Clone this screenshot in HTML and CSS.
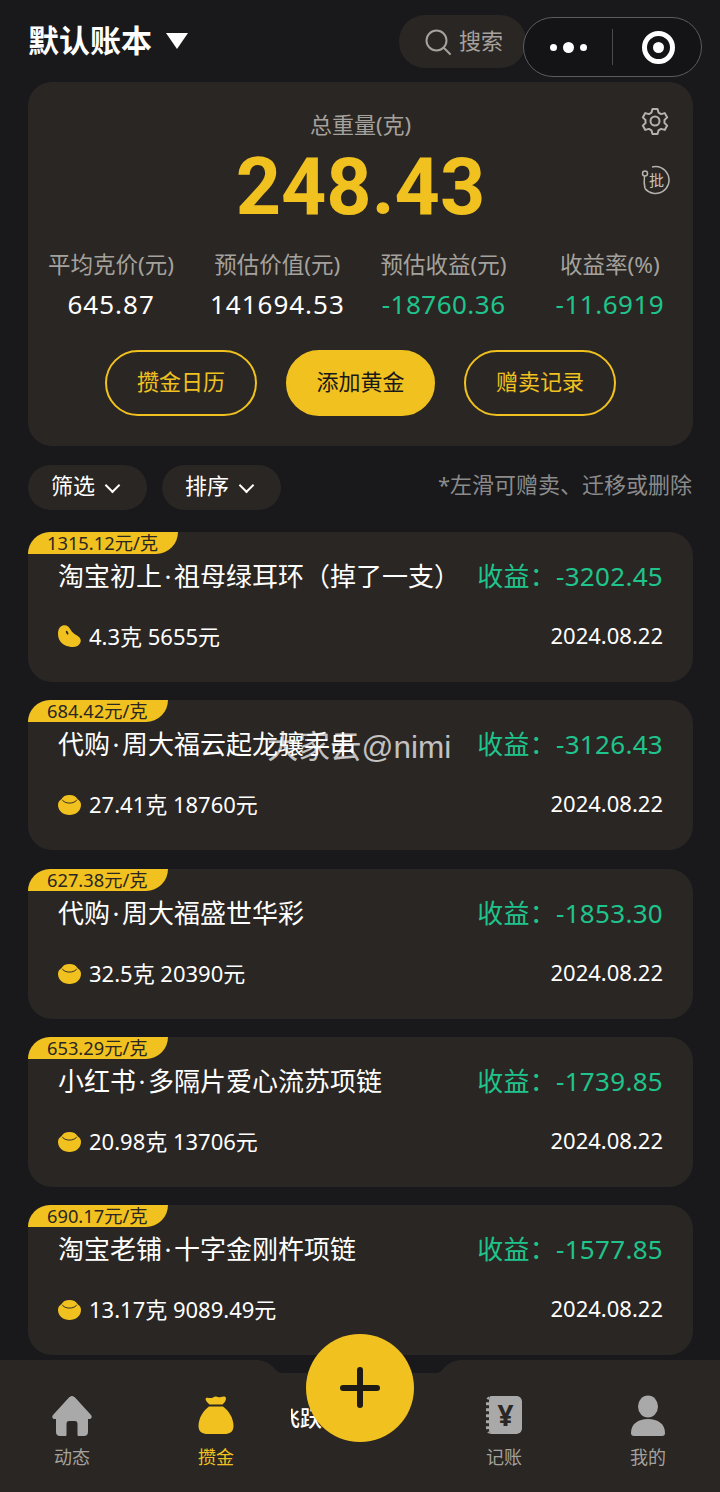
FILE: index.html
```html
<!DOCTYPE html>
<html lang="zh-CN">
<head>
  <meta charset="UTF-8">
  <title>攒金</title>
  <link rel="stylesheet" href="styles.css">
</head>
<body>
<div class="page">

  <header class="top">
    <div class="book"><span class="book-name">默认账本</span><span class="caret"></span></div>
    <div class="search">
      <svg width="28" height="28" viewBox="0 0 28 28" fill="none" stroke="#a5a29e" stroke-width="2"><circle cx="12.5" cy="12.5" r="10"/><path d="M20 20l6 6" stroke-linecap="round"/></svg>
      <span>搜索</span>
    </div>
  </header>

  <!-- 小程序胶囊 -->
  <div class="capsule">
    <div class="dots"><i></i><b></b><i></i></div>
    <div class="capsule-line"></div>
    <div class="target"></div>
  </div>

  <section class="summary">
    <svg class="gear" width="28" height="28" viewBox="0 0 28 28" fill="none" stroke="#b5b2ae" stroke-width="2" stroke-linejoin="round"><path d="M11.500 2h5l1 3.600 2.600 1.500 3.600-1 2.500 4.300-2.700 2.600v3l2.700 2.600-2.500 4.300-3.600-1-2.600 1.500-1 3.600h-5l-1-3.600-2.600-1.500-3.600 1-2.500-4.300 2.700-2.600v-3l-2.700-2.600 2.500-4.300 3.600 1 2.600-1.500z"/><circle cx="14" cy="14" r="4.500"/></svg>
    <div class="batch">
      <svg width="30" height="30" viewBox="0 0 30 30" fill="none" stroke="#b5b2ae" stroke-width="1.500"><path d="M11 2a13.500 13.500 0 1 1-7 21.500"/><circle cx="4" cy="8.500" r="2.500"/><path d="M3.500 11c-.5 4-.5 8.500.5 12.500"/></svg>
      <span>批</span>
    </div>
    <div class="summary-title">总重量(克)</div>
    <div class="summary-value">248.43</div>
    <div class="stats">
      <div class="stat"><div class="stat-label">平均克价(元)</div><div class="stat-num">645.87</div></div>
      <div class="stat"><div class="stat-label">预估价值(元)</div><div class="stat-num">141694.53</div></div>
      <div class="stat"><div class="stat-label">预估收益(元)</div><div class="stat-num green">-18760.36</div></div>
      <div class="stat"><div class="stat-label">收益率(%)</div><div class="stat-num green">-11.6919</div></div>
    </div>
    <div class="actions">
      <div class="btn">攒金日历</div>
      <div class="btn btn-solid">添加黄金</div>
      <div class="btn">赠卖记录</div>
    </div>
  </section>

  <div class="filters">
    <div class="pill"><span>筛选</span><span class="chev"></span></div>
    <div class="pill"><span>排序</span><span class="chev"></span></div>
    <div class="hint">*左滑可赠卖、迁移或删除</div>
  </div>

  <div class="list">
    <div class="item">
      <div class="price">1315.12元/克</div>
      <div class="item-row item-head">
        <div class="item-name">淘宝初上<span class="mid">·</span>祖母绿耳环（掉了一支）</div>
        <div class="item-gain">收益：-3202.45</div>
      </div>
      <div class="item-row">
        <div class="item-info">
          <svg class="kind" viewBox="0 0 24 24"><path d="M5 .500c3.500-1 6.500 1 8.500 5 1 2 3 3.500 5.500 5 3.500 2 5.500 4 4.500 7.500-1.500 4.500-7 6-12 4.500C4.500 21 0 16 0 9 0 5 1.500 1.500 5 .500z" fill="#f0c11f"/><path d="M9 7l1 2" stroke="#2a2623" stroke-width="1.800" stroke-linecap="round"/></svg>
          4.3克 5655元
        </div>
        <div class="item-date">2024.08.22</div>
      </div>
    </div>
    <div class="item">
      <div class="price">684.42元/克</div>
      <div class="item-row item-head">
        <div class="item-name">代购<span class="mid">·</span>周大福云起龙骧手串</div>
        <div class="item-gain">收益：-3126.43</div>
      </div>
      <div class="item-row">
        <div class="item-info">
          <svg class="kind" viewBox="0 0 24 24"><use href="#ingot"/></svg>
          27.41克 18760元
        </div>
        <div class="item-date">2024.08.22</div>
      </div>
    </div>
    <div class="item">
      <div class="price">627.38元/克</div>
      <div class="item-row item-head">
        <div class="item-name">代购<span class="mid">·</span>周大福盛世华彩</div>
        <div class="item-gain">收益：-1853.30</div>
      </div>
      <div class="item-row">
        <div class="item-info">
          <svg class="kind" viewBox="0 0 24 24"><use href="#ingot"/></svg>
          32.5克 20390元
        </div>
        <div class="item-date">2024.08.22</div>
      </div>
    </div>
    <div class="item">
      <div class="price">653.29元/克</div>
      <div class="item-row item-head">
        <div class="item-name">小红书<span class="mid">·</span>多隔片爱心流苏项链</div>
        <div class="item-gain">收益：-1739.85</div>
      </div>
      <div class="item-row">
        <div class="item-info">
          <svg class="kind" viewBox="0 0 24 24"><use href="#ingot"/></svg>
          20.98克 13706元
        </div>
        <div class="item-date">2024.08.22</div>
      </div>
    </div>
    <div class="item">
      <div class="price">690.17元/克</div>
      <div class="item-row item-head">
        <div class="item-name">淘宝老铺<span class="mid">·</span>十字金刚杵项链</div>
        <div class="item-gain">收益：-1577.85</div>
      </div>
      <div class="item-row">
        <div class="item-info">
          <svg class="kind" viewBox="0 0 24 24"><use href="#ingot"/></svg>
          13.17克 9089.49元
        </div>
        <div class="item-date">2024.08.22</div>
      </div>
    </div>
  </div>

  <nav class="tabbar">
    <svg class="notch" width="208" height="14" viewBox="0 0 208 14"><path d="M0 0h208c-8 0-13 2-18 7-3 3-5 6-9 6H27c-4 0-6-3-9-6C13 2 8 0 0 0z" fill="#19191c"/></svg>
    <div class="tab">
      <svg width="42" height="42" viewBox="0 0 42 42"><path d="M21 1c1.500 0 2.500 1 3.500 2L40 20c1.500 2 .5 4-2 4h-1v13c0 2.500-1.500 4-4 4h-5c-1 0-1.500-.5-1.500-1.500V29c0-2-1-3-2.500-3h-6c-1.500 0-2.500 1-2.500 3v10.500c0 1-.5 1.500-1.500 1.500H9c-2.500 0-4-1.500-4-4V24H4c-2.500 0-3.500-2-2-4L17.500 3c1-1 2-2 3.500-2z" fill="#a9a9a9"/></svg>
      <span>动态</span>
    </div>
    <div class="tab tab-on">
      <svg width="42" height="42" viewBox="0 0 42 42"><path d="M11 3c2-1 3.500.5 5.500 0S19 1 21 1.500s3 1 5 .5 5-1 5 1.500c0 2.500-2 4.500-3.500 6h-13C13 8 9.500 5 11 3z" fill="#f0c11f"/><path d="M14 11.500h14C33.500 15.500 38.500 23 38.500 31c0 6-4 8-9 8h-17c-5 0-9-2-9-8 0-8 5-15.500 10.500-19.500z" fill="#f0c11f"/></svg>
      <span>攒金</span>
    </div>
    <div class="tab tab-empty"></div>
    <div class="tab">
      <div class="ledger"><span>¥</span></div>
      <span>记账</span>
    </div>
    <div class="tab">
      <svg width="42" height="42" viewBox="0 0 42 42" fill="#a9a9a9"><ellipse cx="21" cy="11.500" rx="10" ry="11"/><path d="M21 24c10 0 17 5 17 14 0 2-1 3-3 3H7c-2 0-3-1-3-3 0-9 7-14 17-14z"/></svg>
      <span>我的</span>
    </div>
  </nav>

  <div class="behind-plus">飞跃</div>
  <div class="plus"><i></i><b></b></div>
  <div class="watermark">大家云@nimi</div>
</div>

<svg width="0" height="0" class="defs">
  <symbol id="ingot" viewBox="0 0 24 24"><path d="M12 2c4 0 7 1.500 8.500 4.500C23 8 24 10 24 12.500 24 18.500 18.500 23 12 23S0 18.500 0 12.500C0 10 1 8 3.500 6.500 5 3.500 8 2 12 2z" fill="#f0c11f"/><path d="M4.500 7.500C7 10 9.500 10.500 12 10.500s5-.5 7.500-3" fill="none" stroke="#2a2623" stroke-width="1"/></symbol>
</svg>
</body>
</html>
```

FILE: styles.css
```css
* {
  box-sizing: border-box;
}

html, body {
  margin: 0;
  padding: 0;
}

body {
  background: #19191c;
  font-family: "Noto Sans", "Noto Sans CJK SC", sans-serif;
  color: #fff;
}

.page {
  position: relative;
  width: 720px;
  height: 1492px;
  overflow: hidden;
}

.defs {
  position: absolute;
}

.top {
  height: 82px;
  padding: 15px 194px 0 28px;
  display: flex;
  align-items: flex-start;
  justify-content: space-between;
}

.book {
  height: 50px;
  display: flex;
  align-items: center;
  font-size: 31px;
  font-weight: 700;
}

.book-name {
  margin-top: -4px;
}

.caret {
  width: 0;
  height: 0;
  margin-left: 14px;
  margin-top: 1px;
  border-left: 11px solid transparent;
  border-right: 11px solid transparent;
  border-top: 16px solid #fff;
}

.search {
  width: 127px;
  height: 53px;
  padding-left: 25px;
  display: flex;
  align-items: center;
  gap: 7px;
  border-radius: 26px;
  background: #2a2623;
  color: #a5a29e;
  font-size: 22px;
}

.search span {
  margin-top: -6px;
}

.capsule {
  position: absolute;
  left: 523px;
  top: 17px;
  width: 179px;
  height: 60px;
  display: flex;
  align-items: center;
  border: 1px solid #5c5c5e;
  border-radius: 30px;
  background: #141416;
}

.dots {
  width: 88px;
  display: flex;
  justify-content: center;
  align-items: center;
  gap: 6px;
}

.dots i {
  width: 7px;
  height: 7px;
  border-radius: 50%;
  background: #fff;
}

.dots b {
  width: 11px;
  height: 11px;
  border-radius: 50%;
  background: #fff;
}

.capsule-line {
  width: 1px;
  height: 36px;
  background: #4a4a4c;
}

.target {
  width: 33px;
  height: 33px;
  margin-left: 29px;
  border: 5px solid #fff;
  border-radius: 50%;
  position: relative;
}

.target::after {
  content: "";
  position: absolute;
  left: 6px;
  top: 6px;
  width: 11px;
  height: 11px;
  border-radius: 50%;
  background: #fff;
}

.summary {
  position: relative;
  height: 364px;
  margin: 0 27px 0 28px;
  padding-top: 25px;
  border-radius: 24px;
  background: #2a2623;
}

.gear {
  position: absolute;
  right: 24px;
  top: 25px;
}

.batch {
  position: absolute;
  right: 22px;
  top: 83px;
  width: 30px;
  height: 30px;
}

.batch svg {
  display: block;
}

.batch span {
  position: absolute;
  left: 8px;
  top: 6px;
  font-size: 15px;
  line-height: 18px;
  color: #c5c2be;
}

.summary-title {
  text-align: center;
  font-size: 22px;
  line-height: 34px;
  color: #a5a29e;
}

.summary-value {
  text-align: center;
  font-family: Roboto, sans-serif;
  font-size: 79px;
  font-weight: 700;
  line-height: 84px;
  margin-top: 4px;
  color: #f0c11f;
}

.stats {
  display: grid;
  grid-template-columns: repeat(4, 1fr);
  margin-top: 19px;
  text-align: center;
}

.stat-label {
  font-size: 22.500px;
  line-height: 34px;
  color: #a5a29e;
}

.stat-num {
  font-size: 26px;
  line-height: 44px;
  letter-spacing: 1px;
}

.stat-num.green {
  letter-spacing: .5px;
}

.green {
  color: #1fc48c;
}

.actions {
  display: flex;
  justify-content: center;
  gap: 29px;
  margin-top: 24px;
}

.btn {
  width: 152px;
  height: 66px;
  padding-bottom: 6px;
  display: flex;
  align-items: center;
  justify-content: center;
  border: 2px solid #f0c11f;
  border-radius: 33px;
  color: #f0c11f;
  font-size: 22px;
}

.btn-solid {
  width: 149px;
  background: #f0c11f;
  color: #19191c;
}

.filters {
  display: flex;
  align-items: center;
  gap: 15px;
  height: 45px;
  margin: 19px 27px 0 28px;
}

.pill {
  width: 119px;
  height: 45px;
  padding-left: 23px;
  display: flex;
  align-items: center;
  gap: 12px;
  border-radius: 23px;
  background: #2a2623;
  font-size: 22px;
}

.pill span:first-child {
  margin-top: -7px;
}

.chev {
  width: 11px;
  height: 11px;
  margin-top: -5px;
  border-right: 2px solid #fff;
  border-bottom: 2px solid #fff;
  transform: rotate(45deg);
}

.hint {
  margin-left: auto;
  margin-right: 1px;
  margin-bottom: 9px;
  font-size: 22px;
  color: #8b8b8b;
}

.list {
  margin: 22px 27px 0 28px;
  display: flex;
  flex-direction: column;
  gap: 18.250px;
}

.item {
  position: relative;
  height: 150px;
  padding: 21px 30px 0;
  border-radius: 24px;
  background: #2a2623;
}

.price {
  position: absolute;
  left: 0;
  top: 0;
  height: 22px;
  padding: 0 20px 0 19px;
  border-radius: 22px 0 22px 0;
  background: #f0c11f;
  color: #2a2623;
  font-size: 18.300px;
  line-height: 21px;
}

.item-row {
  display: flex;
  align-items: center;
  justify-content: space-between;
  height: 44px;
}

.item-head {
  margin-bottom: 16px;
}

.item-name {
  font-size: 26px;
  white-space: nowrap;
}

.mid {
  margin: 0 2.500px;
}

.item-gain {
  font-size: 26px;
  letter-spacing: .3px;
  color: #1fc48c;
  white-space: nowrap;
}

.item-info {
  display: flex;
  align-items: center;
  gap: 8px;
  font-size: 22px;
}

.kind {
  width: 23px;
  height: 23px;
  margin-top: 3px;
}

.item-date {
  font-size: 22px;
}

.tabbar {
  position: absolute;
  left: 0;
  right: 0;
  bottom: 0;
  height: 132px;
  padding-top: 35px;
  display: grid;
  grid-template-columns: repeat(5, 144px);
  background: #2a2623;
}

.notch {
  position: absolute;
  left: 255px;
  top: 0;
}

.tab {
  display: flex;
  flex-direction: column;
  align-items: center;
  gap: 6px;
  font-size: 18px;
  color: #a5a29e;
}

.tab-on {
  color: #f0c11f;
}

.ledger {
  width: 36px;
  height: 38px;
  margin: 1px 0 3px;
  display: flex;
  align-items: center;
  justify-content: center;
  border-radius: 5px;
  background: #a9a9a9;
  background-clip: padding-box;
  border-left: 3px dotted #a9a9a9;
  color: #2a2623;
  font-size: 28px;
  font-weight: 700;
  line-height: 38px;
}

.behind-plus {
  position: absolute;
  left: 291px;
  top: 1404px;
  width: 40px;
  height: 28px;
  overflow: hidden;
  text-indent: -13px;
  font-size: 22px;
  font-weight: 500;
  line-height: 26px;
  white-space: nowrap;
  color: #fff;
}

.plus {
  position: absolute;
  left: 306px;
  top: 1334px;
  width: 108px;
  height: 108px;
  border-radius: 50%;
  background: #f0c11f;
}

.plus i, .plus b {
  position: absolute;
  background: #1e1b17;
  border-radius: 3px;
}

.plus i {
  left: 34px;
  top: 51px;
  width: 40px;
  height: 6px;
}

.plus b {
  left: 51px;
  top: 33px;
  width: 6px;
  height: 41px;
}

.watermark {
  position: absolute;
  left: 267px;
  top: 726px;
  font-family: "Liberation Sans", "Noto Sans CJK SC", sans-serif;
  font-size: 31.500px;
  line-height: 42px;
  color: rgba(255, 255, 255, 0.72);
  white-space: nowrap;
}
```
